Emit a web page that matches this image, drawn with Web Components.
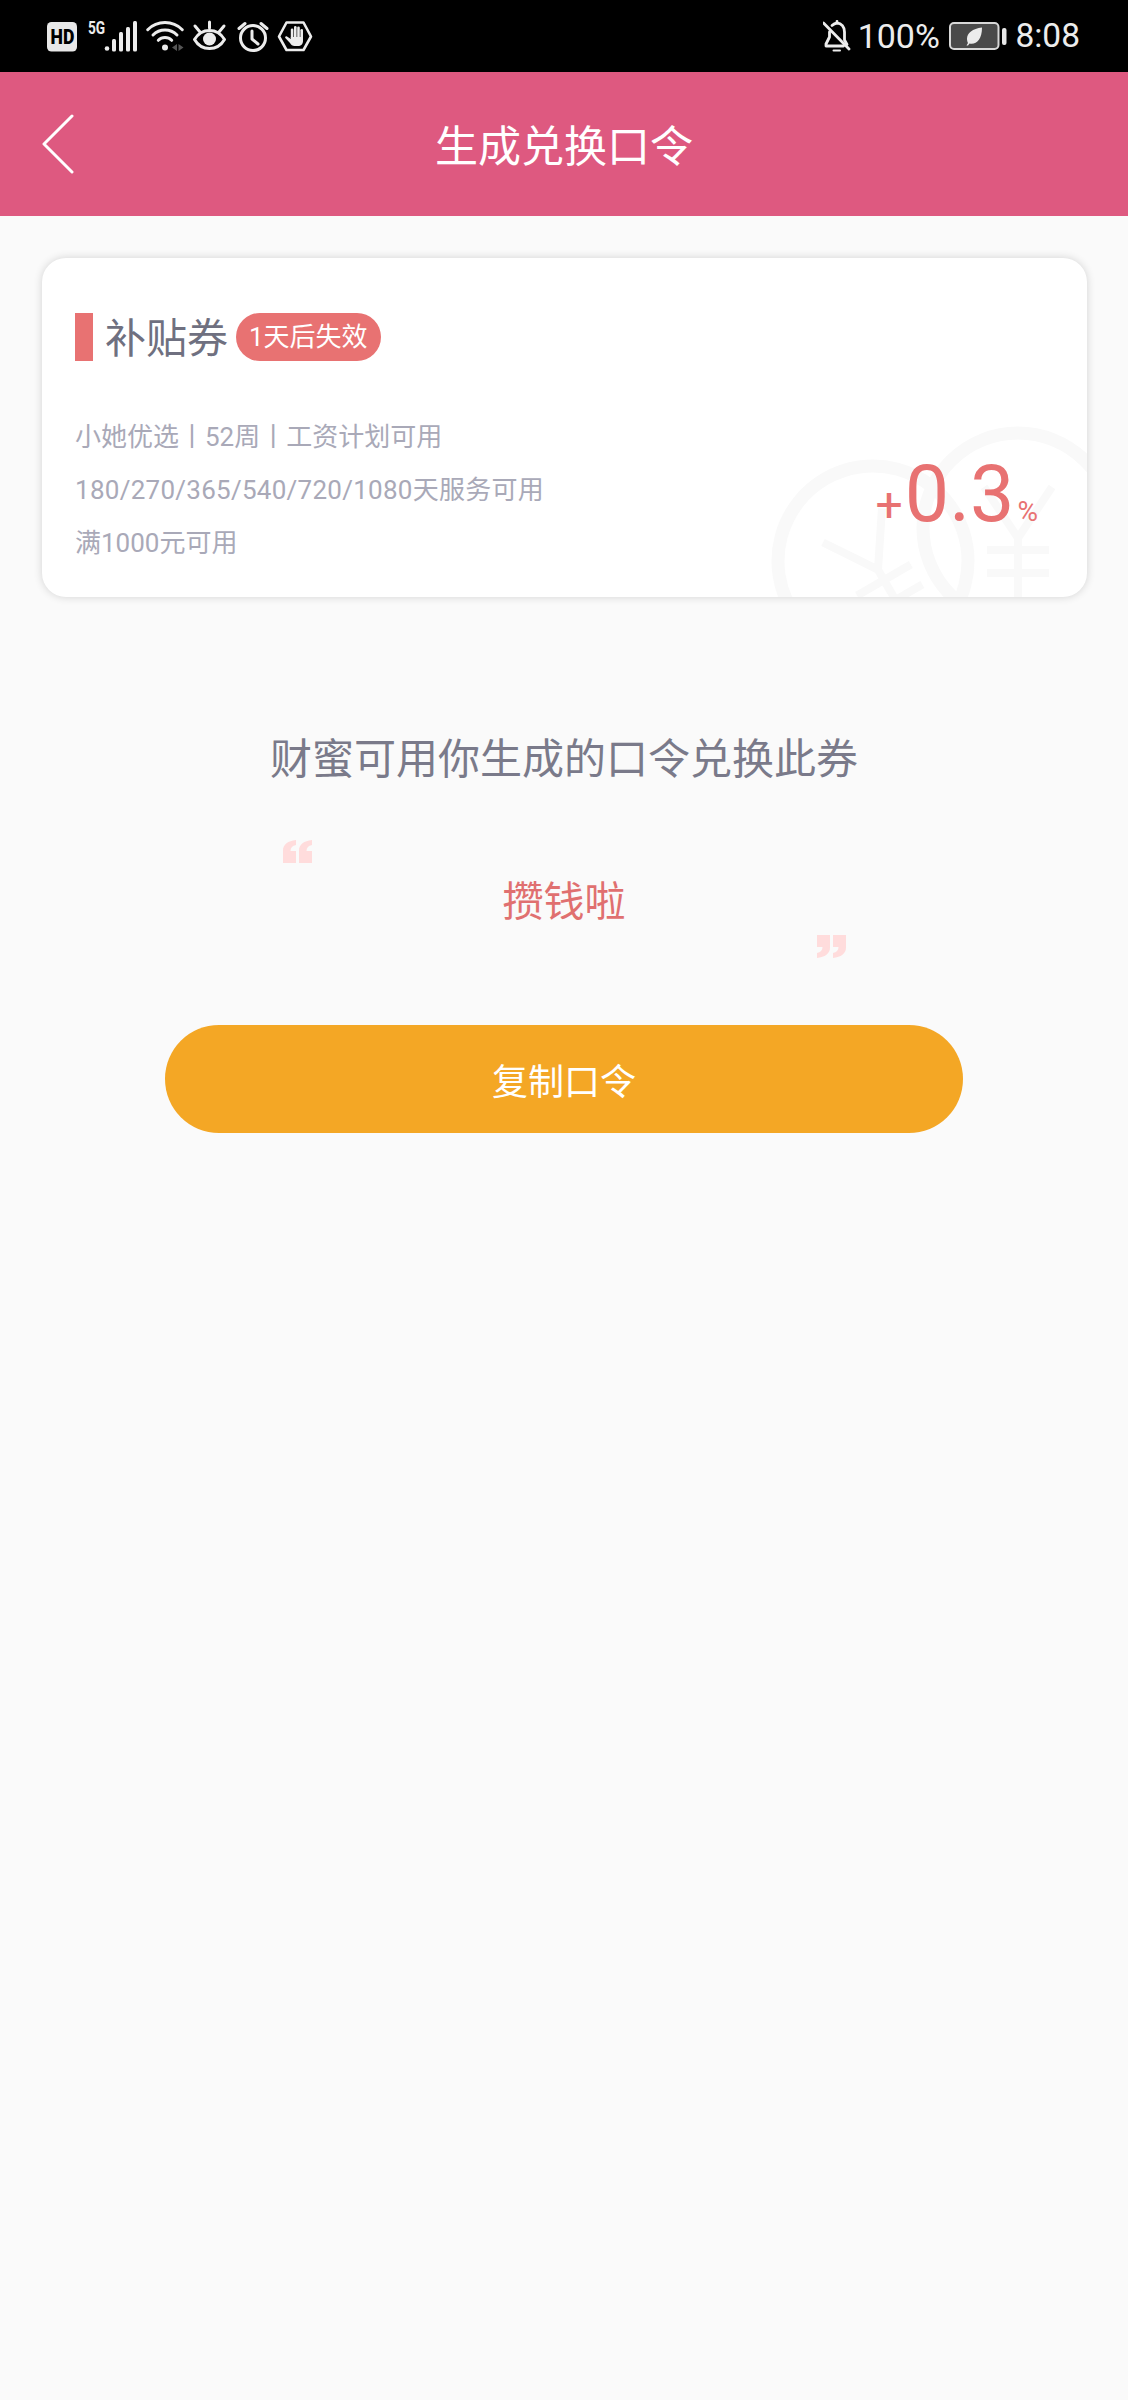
<!DOCTYPE html>
<html lang="zh-CN">
<head>
<meta charset="utf-8">
<title>生成兑换口令</title>
<style>
  html, body { margin: 0; padding: 0; background: #fafafa; }
  body { font-family: Roboto, "Noto Sans CJK SC", sans-serif; }
</style>
</head>
<body>
<redeem-page>
  <status-bar></status-bar>
  <app-header>生成兑换口令</app-header>
  <coupon-card name="补贴券" expiry="1天后失效" amount="0.3">
    <div>小她优选丨52周丨工资计划可用</div>
    <div style="letter-spacing:.27px">180/270/365/540/720/1080天服务可用</div>
    <div>满1000元可用</div>
  </coupon-card>
  <code-panel hint="财蜜可用你生成的口令兑换此券" code="攒钱啦"></code-panel>
  <pill-button>复制口令</pill-button>
</redeem-page>

<script>
function shadow(host, html) {
  host.attachShadow({ mode: 'open' }).innerHTML = html;
}

customElements.define('redeem-page', class extends HTMLElement {
  connectedCallback() {
    shadow(this, `<style>
      :host { display: flex; flex-direction: column; min-height: 2400px; background: #fafafa;
        font-family: Roboto, "Noto Sans CJK SC", sans-serif; }
    </style><slot></slot>`);
  }
});

customElements.define('status-bar', class extends HTMLElement {
  connectedCallback() {
    shadow(this, `<style>
      :host { display: flex; align-items: center; height: 72px; background: #000; color: #ececec;
        font-family: Roboto, sans-serif; font-size: 34px; }
      svg { display: block; flex: none; }
      .left { margin-left: 46px; }
      .spacer { flex: 1; }
      .pct { margin-left: 7px; line-height: 72px; }
      .batt { margin-left: 9px; }
      .time { margin-left: 7.500px; margin-right: 48px; line-height: 72px; font-size: 33.500px; }
    </style>
    <svg class="left" width="268" height="72" viewBox="46 0 268 72" fill="none" stroke="#ececec" stroke-linecap="round" stroke-linejoin="round">
      <rect x="47" y="22" width="30" height="29.500" rx="4.500" fill="#e8e8e8" stroke="none"/>
      <text transform="translate(50.500 44) scale(.86 1)" font-family="Roboto" font-weight="900" font-size="20.500" fill="#000" stroke="none">HD</text>
      <text transform="translate(88 34) scale(.76 1)" font-family="Roboto" font-weight="700" font-size="18" fill="#ececec" stroke="none">5G</text>
      <g fill="#ececec" stroke="none">
        <circle cx="107" cy="48.500" r="2.300"/>
        <rect x="112" y="39" width="4" height="12.500" rx="1.500"/>
        <rect x="119" y="32" width="4" height="19.500" rx="1.500"/>
        <rect x="126" y="27" width="4" height="24.500" rx="1.500"/>
        <rect x="133" y="21" width="4" height="30.500" rx="1.500"/>
      </g>
      <g stroke-width="3">
        <path d="M147.700 29.700A24.500 24.500 0 0 1 182.300 29.700"/>
        <path d="M153 35A17 17 0 0 1 177 35"/>
        <path d="M158.300 40.300A9.500 9.500 0 0 1 171.700 40.300"/>
      </g>
      <circle cx="165" cy="47.500" r="3" fill="#ececec" stroke="none"/>
      <path d="M177 44V51L172 47.500ZM178.500 44V51L183.500 47.500Z" fill="#555" stroke="none"/>
      <g stroke-width="3">
        <path d="M194.500 39.500C198 33.500 203 30.500 209.500 30.500S221 33.500 224.500 39.500C221 45.500 216 48.500 209.500 48.500S198 45.500 194.500 39.500Z"/>
        <path d="M209.500 22V28M195 26L200 32M224 26L219 32"/>
      </g>
      <circle cx="209.500" cy="39" r="6.500" fill="#ececec" stroke="none"/>
      <g stroke-width="3">
        <circle cx="253" cy="38" r="12.500"/>
        <path d="M252 31V39L258 44"/>
        <path d="M239 28.500L245 23.500M267 28.500L261 23.500"/>
      </g>
      <path d="M279 36.500L286.500 22.500H303.500L311 36.500L303.500 50H286.500Z" stroke-width="2.600"/>
      <g fill="#ececec" stroke="none">
        <rect x="290.800" y="28.500" width="2.600" height="10" rx="1.300"/>
        <rect x="294" y="26" width="2.600" height="12" rx="1.300"/>
        <rect x="297.200" y="26.500" width="2.600" height="12" rx="1.300"/>
        <rect x="300.400" y="29" width="2.600" height="10" rx="1.300"/>
        <path d="M290.800 37H303V41C303 44 301 46 298 46H294.500C292.500 46 291 45 290 43L285.300 38C284.700 37 285.800 35.800 287 36.500L290.800 39Z"/>
      </g>
    </svg>
    <div class="spacer"></div>
    <svg width="28" height="34" viewBox="824 19 28 34" fill="none" stroke="#ececec" stroke-width="2.800" stroke-linecap="round" stroke-linejoin="round">
      <path d="M830.500 32V37L827 44V46H844.500"/>
      <path d="M833 25.500C834.500 24 836 23.200 838 23V21.500M838 23C842.500 23.200 845.500 27 845.500 32V40L848 44.500"/>
      <path d="M834.500 50.500H841" stroke-width="2"/>
      <path d="M824.500 23L850 49"/>
    </svg>
    <span class="pct">100%</span>
    <svg class="batt" width="59" height="29" viewBox="0 0 59 29">
      <rect x="1" y="1" width="48.500" height="26" rx="4" fill="#4a4a4a" stroke="#d8d8d8" stroke-width="2"/>
      <rect x="53" y="6" width="4.500" height="17" rx="2" fill="#e6e6e6"/>
      <path d="M33 5.500C23.500 6.500 18 11 18 17C18 18.500 18.500 20 19 21L17.500 23.500L19 23.500L20.500 21.500C27 23 33 18 33 5.500Z" fill="#ececec"/>
    </svg>
    <span class="time">8:08</span>`);
  }
});

customElements.define('app-header', class extends HTMLElement {
  connectedCallback() {
    shadow(this, `<style>
      :host { display: flex; align-items: center; justify-content: center; position: relative; height: 144px;
        background: #de5980; color: #fff; font-size: 43px; }
      svg { position: absolute; left: 42px; top: 42px; }
      .t { margin-top: -3px; }
    </style>
    <svg width="33" height="60" viewBox="0 0 33 60" fill="none" stroke="#fff" stroke-width="3" stroke-linecap="round" stroke-linejoin="round"><path d="M30 2L2 30L30 58"/></svg>
    <span class="t"><slot></slot></span>`);
  }
});

customElements.define('coupon-card', class extends HTMLElement {
  connectedCallback() {
    const a = n => this.getAttribute(n);
    shadow(this, `<style>
      :host { display: block; position: relative; overflow: hidden; box-sizing: border-box; height: 339px;
        margin: 42px 41px 0 42px; padding: 55px 49px 0 33px; background: #fff; border-radius: 24px;
        box-shadow: 0 0 8px rgba(0,0,0,.16); }
      .mark { position: absolute; left: 0; top: 0; pointer-events: none; }
      .title, .body { position: relative; }
      .title { display: flex; align-items: center; height: 48px; }
      .bar { width: 18px; height: 48px; background: #e87272; }
      .name { margin-left: 12px; padding-top: 4px; font-size: 41px; line-height: 48px; color: #6f7080; }
      .pill { margin-left: 8px; height: 48px; box-sizing: border-box; padding: 0 13px; border-radius: 24px;
        background: #e87272; color: #fff; font-size: 26px; line-height: 48px; white-space: nowrap; }
      .body { display: flex; justify-content: space-between; margin-top: 50px; }
      .lines { font-size: 26px; line-height: 53px; color: #a9a9b8; white-space: nowrap; }
      .amt { align-self: flex-end; display: flex; align-items: baseline; color: #e87272; margin-bottom: 26px; line-height: 64px; }
      .plus { font-size: 48px; }
      .val { font-size: 79px; margin-left: 2px; }
      .pc { font-size: 28px; margin-left: 3px; }
    </style>
    <svg class="mark" width="1045" height="339" viewBox="42 258 1045 339" fill="none" stroke="#f9f9f9">
      <defs><g id="y" stroke-width="8">
        <circle r="95" stroke-width="13"/>
        <path d="M-34 -41L0 10L34 -41M-31 22H31M-31 45H31M0 10V90"/>
      </g></defs>
      <use href="#y" transform="translate(873 561) rotate(-30)"/>
      <use href="#y" transform="translate(1018 528)"/>
    </svg>
    <div class="title"><span class="bar"></span><span class="name">${a('name')}</span><span class="pill">${a('expiry')}</span></div>
    <div class="body">
      <div class="lines"><slot></slot></div>
      <div class="amt"><span class="plus">+</span><span class="val">${a('amount')}</span><span class="pc">%</span></div>
    </div>`);
  }
});

customElements.define('code-panel', class extends HTMLElement {
  connectedCallback() {
    const a = n => this.getAttribute(n);
    const q = '<path d="M0 23V10.500C0 4.500 5 .8 13 0V5C9.500 5.800 7.500 7.800 7.500 11H13V23Z"/><path d="M16 23V10.500C16 4.500 21 .8 29 0V5C25.500 5.800 23.500 7.800 23.500 11H29V23Z"/>';
    shadow(this, `<style>
      :host { display: flex; flex-direction: column; align-items: center; margin-top: 133px; }
      .hint { font-size: 42px; line-height: 60px; color: #7a7a8a; }
      .box { width: 564px; margin-top: 50px; display: flex; flex-direction: column; }
      svg { display: block; fill: #ffdcdc; }
      .open { margin-left: 1px; }
      .close { align-self: flex-end; margin-top: 3px; transform: rotate(180deg); }
      .code { margin-top: 9px; text-align: center; font-size: 41px; line-height: 60px; color: #e07070; }
    </style>
    <div class="hint">${a('hint')}</div>
    <div class="box">
      <svg class="open" width="29" height="23" viewBox="0 0 29 23">${q}</svg>
      <div class="code">${a('code')}</div>
      <svg class="close" width="29" height="23" viewBox="0 0 29 23">${q}</svg>
    </div>`);
  }
});

customElements.define('pill-button', class extends HTMLElement {
  connectedCallback() {
    shadow(this, `<style>
      :host { display: flex; align-items: center; justify-content: center; align-self: center; width: 798px; height: 108px;
        margin-top: 67px; border-radius: 54px; background: #f4a725; color: #fff; font-size: 36px; }
    </style><slot></slot>`);
  }
});
</script>
</body>
</html>
